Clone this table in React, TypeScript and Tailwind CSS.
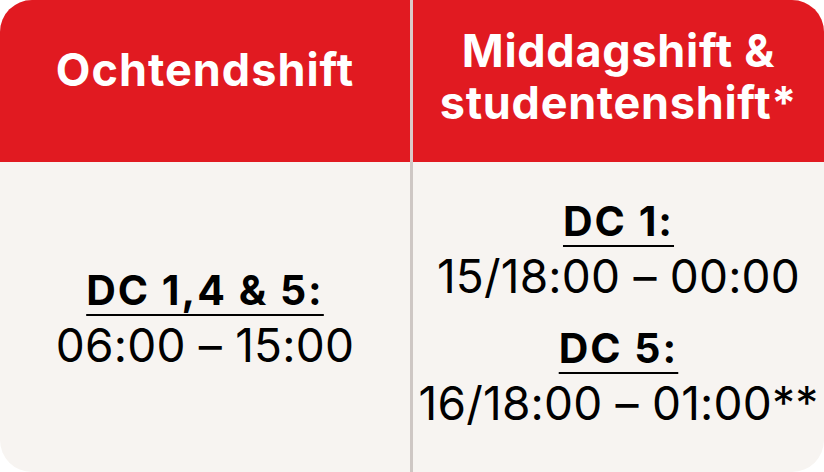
import React from "react";

const font = { fontFamily: "Inter, 'Noto Sans', sans-serif" };

function Label({ children }: { children: React.ReactNode }) {
  return (
    <div className="text-[41px] font-bold leading-[52px] tracking-[2px] underline decoration-[1.5px] underline-offset-[9px]">
      {children}
    </div>
  );
}

function Time({ children }: { children: React.ReactNode }) {
  return <div className="text-[46px] font-normal leading-[58px] tracking-[0.2px]">{children}</div>;
}

export default function App() {
  return (
    <div className="w-[824px] h-[472px] bg-white" style={font}>
      <div className="w-full h-full rounded-[32px] overflow-hidden grid grid-cols-[410px_3px_1fr] grid-rows-[162px_1fr] bg-[#f7f4f1]">
        <div className="bg-[#e11a21] text-white flex justify-center pt-[44px]">
          <div className="text-[45px] font-bold leading-[52px] tracking-[1px]">Ochtendshift</div>
        </div>
        <div className="bg-[#dcc9c8]" />
        <div className="bg-[#e11a21] text-white flex justify-center pt-[25px]">
          <div className="text-[45px] font-bold leading-[52px] tracking-[0.7px] text-center">
            Middagshift &amp;
            <br />
            studentenshift*
          </div>
        </div>

        <div className="flex flex-col items-center justify-center text-black pt-[4px]">
          <Label>DC 1,4 &amp; 5:</Label>
          <Time>06:00 – 15:00</Time>
        </div>
        <div className="bg-[#cec7c4]" />
        <div className="flex flex-col items-center justify-center text-black pb-[8px]">
          <Label>DC 1:</Label>
          <Time>15/18:00 – 00:00</Time>
          <div className="h-[17px]" />
          <Label>DC 5:</Label>
          <Time>16/18:00 – 01:00**</Time>
        </div>
      </div>
    </div>
  );
}
